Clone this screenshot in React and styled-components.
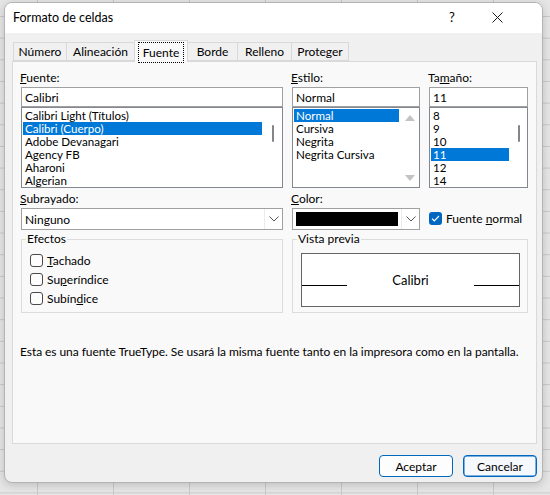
import React from 'react';
import styled, { createGlobalStyle } from 'styled-components';

const GlobalStyle = createGlobalStyle`
  html, body { margin: 0; padding: 0; }
  body {
    width: 550px;
    height: 495px;
    overflow: hidden;
    background-color: #e6e6e6;
    background-image:
      linear-gradient(to bottom, #c9c9c9 1px, transparent 1px),
      linear-gradient(to right, #c9c9c9 1px, transparent 1px);
    background-size: 100% 21.67px, 76px 100%;
    background-position: 0 16px, 37px 0;
    font-family: Lato, "Open Sans", sans-serif;
  }
`;

const Dialog = styled.div`
  box-sizing: border-box;
  width: 539px;
  height: 481px;
  margin: 2px 0 0 4px;
  border: 1px solid #b4b4b4;
  border-radius: 8px;
  overflow: hidden;
  background: #f0f0f0;
  box-shadow: 0 2px 10px rgba(0, 0, 0, 0.18);
  display: flex;
  flex-direction: column;
  font-size: 12px;
  color: #000;
`;

const TitleBar = styled.div`
  height: 30px;
  background: #fff;
  display: flex;
  align-items: center;
  padding: 0 0 2px 8px;
  box-sizing: border-box;
`;

const Title = styled.div`
  flex: 1;
  font-size: 12.5px;
`;

const TitleButton = styled.div`
  width: 30px;
  height: 28px;
  display: flex;
  align-items: center;
  justify-content: center;
  font-size: 13px;
  margin-left: ${p => p.$ml || 0}px;
  margin-right: ${p => p.$mr || 0}px;
`;

const Body = styled.div`
  flex: 1;
  padding: 7px 5px 0 7px;
  display: flex;
  flex-direction: column;
`;

const TabStrip = styled.div`
  height: 21px;
  display: flex;
  align-items: flex-end;
  padding-left: 1px;
  position: relative;
  z-index: 1;
`;

const Tab = styled.div`
  box-sizing: border-box;
  width: ${p => p.$w}px;
  height: ${p => (p.$active ? 22 : 19)}px;
  margin-left: -1px;
  margin-bottom: ${p => (p.$active ? -1 : 0)}px;
  border: 1px solid #d9d9d9;
  border-bottom: ${p => (p.$active ? 'none' : '1px solid #d9d9d9')};
  background: ${p => (p.$active ? '#f9f9f9' : '#f0f0f0')};
  display: flex;
  align-items: center;
  justify-content: center;
  &:first-child { margin-left: 0; }
`;

const FocusRect = styled.span`
  box-sizing: border-box;
  width: 100%;
  height: 100%;
  margin: 2px 3px 1px;
  outline: 1px dotted #000;
  outline-offset: -1px;
  display: flex;
  align-items: center;
  justify-content: center;
`;

const Panel = styled.div`
  box-sizing: border-box;
  height: 383px;
  background: #f9f9f9;
  border: 1px solid #d9d9d9;
  padding: 8px 8px 0 8px;
`;

const Grid = styled.div`
  display: grid;
  grid-template-columns: 262px 128px 99px;
  column-gap: 9px;
`;

const Column = styled.div`
  display: flex;
  flex-direction: column;
`;

const Label = styled.div`
  height: 17px;
  line-height: 16px;
  margin-left: -1px;
  margin-top: ${p => p.$mt || 0}px;
  margin-bottom: ${p => p.$mb || 0}px;
`;

const Input = styled.div`
  box-sizing: border-box;
  height: 20px;
  border: 1px solid #a0a0a0;
  background: #fff;
  padding-left: 3px;
  display: flex;
  align-items: center;
`;

const List = styled.div`
  box-sizing: border-box;
  height: 81px;
  border: 1px solid #828790;
  background: #fff;
  display: flex;
`;

const Items = styled.div`
  flex: 1;
  padding: 1px;
  overflow: hidden;
  font-size: 11.6px;
`;

const Item = styled.div`
  height: 13px;
  line-height: 13px;
  padding-left: 2px;
  white-space: nowrap;
  background: ${p => (p.$sel ? '#0078d7' : 'transparent')};
  color: ${p => (p.$sel ? '#fff' : '#000')};
`;

const ScrollTrack = styled.div`
  width: ${p => p.$w}px;
  display: flex;
  flex-direction: column;
  align-items: center;
  justify-content: ${p => (p.$arrows ? 'space-between' : 'flex-start')};
  padding: ${p => (p.$arrows ? '7px 0 6px' : '17px 0 0')};
`;

const Thumb = styled.div`
  width: 2px;
  height: 17px;
  border-radius: 1px;
  background: #858585;
`;

const Arrow = styled.div`
  width: 0;
  height: 0;
  border-left: 5px solid transparent;
  border-right: 5px solid transparent;
  ${p => (p.$up ? 'border-bottom' : 'border-top')}: 6px solid #c3c3c3;
`;

const Select = styled.div`
  box-sizing: border-box;
  height: 22px;
  border: 1px solid #a0a0a0;
  background: #fff;
  display: flex;
  align-items: stretch;
`;

const SelectValue = styled.div`
  flex: 1;
  display: flex;
  align-items: center;
  padding: ${p => (p.$swatch ? '3px' : '0 0 0 3px')};
`;

const Swatch = styled.div`
  flex: 1;
  align-self: stretch;
  background: #000;
`;

const Chevron = styled.div`
  width: 17px;
  display: flex;
  align-items: center;
  justify-content: center;
  border-left: 1px solid #ebebeb;
`;

const CheckRow = styled.label`
  height: ${p => p.$h || 19}px;
  display: flex;
  align-items: center;
  gap: 4px;
  margin-top: ${p => p.$mt || 0}px;
`;

const Box = styled.span`
  box-sizing: border-box;
  width: 13px;
  height: 13px;
  border-radius: 3px;
  border: ${p => (p.$checked ? 'none' : '1px solid #4a4a4a')};
  background: ${p => (p.$checked ? '#0067c0' : '#fdfdfd')};
  display: flex;
  align-items: center;
  justify-content: center;
`;

const Group = styled.fieldset`
  box-sizing: border-box;
  margin: 2px 0 0;
  height: 81px;
  border: 1px solid #dcdcdc;
  padding: 0 7px 0 8px;
  min-width: 0;
  grid-column: ${p => p.$span || 'auto'};
`;

const Legend = styled.legend`
  padding: 0 1px;
  margin-left: -4px;
  line-height: 14px;
`;

const GroupBody = styled.div`
  padding-top: 5px;
`;

const Preview = styled.div`
  box-sizing: border-box;
  height: 54px;
  margin-top: 7px;
  background: #fff;
  border: 1px solid #646464;
  display: flex;
  align-items: center;
`;

const Rule = styled.div`
  width: 45px;
  height: 1px;
  background: #000;
  margin-top: 11px;
`;

const Sample = styled.div`
  flex: 1;
  text-align: center;
  font-size: 13px;
`;

const Note = styled.div`
  margin: 31px 0 0 -1px;
  line-height: 16px;
  letter-spacing: -0.06px;
`;

const Footer = styled.div`
  display: flex;
  justify-content: flex-end;
  gap: 10px;
  padding-top: 11px;
`;

const Button = styled.button`
  box-sizing: border-box;
  width: 74px;
  height: 22px;
  border: 1px solid #0067c0;
  border-radius: 4px;
  background: ${p => (p.$default ? '#f5f9fd' : '#fdfdfd')};
  box-shadow: ${p => (p.$default ? 'inset 0 0 0 0.5px #0067c0' : 'none')};
  font: inherit;
  color: #000;
  padding: 0;
`;

const fonts = ['Calibri Light (Títulos)', 'Calibri (Cuerpo)', 'Adobe Devanagari', 'Agency FB', 'Aharoni', 'Algerian'];
const styles = ['Normal', 'Cursiva', 'Negrita', 'Negrita Cursiva'];
const sizes = ['8', '9', '10', '11', '12', '14'];
const tabs = [
  ['Número', 54], ['Alineación', 69], ['Fuente', 54], ['Borde', 51], ['Relleno', 55], ['Proteger', 58],
];

const ChevronIcon = () => (
  <svg width="10" height="6" viewBox="0 0 10 6">
    <polyline points="0.5,0.5 5,5 9.5,0.5" fill="none" stroke="#555" strokeWidth="1" />
  </svg>
);

const Check = ({ checked, label, mt, h }) => (
  <CheckRow $mt={mt} $h={h}>
    <Box $checked={checked}>
      {checked && (
        <svg width="9" height="7" viewBox="0 0 9 7">
          <polyline points="1,3.6 3.3,5.8 8,1" fill="none" stroke="#fff" strokeWidth="1.2" />
        </svg>
      )}
    </Box>
    <span>{label}</span>
  </CheckRow>
);

export default function App() {
  return (
    <>
      <GlobalStyle />
      <Dialog>
        <TitleBar>
          <Title>Formato de celdas</Title>
          <TitleButton>?</TitleButton>
          <TitleButton $ml={15} $mr={30}>
            <svg width="11" height="11" viewBox="0 0 11 11">
              <path d="M0.5 0.5 L10.5 10.5 M10.5 0.5 L0.5 10.5" stroke="#1a1a1a" strokeWidth="1" />
            </svg>
          </TitleButton>
        </TitleBar>
        <Body>
          <TabStrip>
            {tabs.map(([t, w]) => (
              <Tab key={t} $w={w} $active={t === 'Fuente'}>
                {t === 'Fuente' ? <FocusRect>{t}</FocusRect> : t}
              </Tab>
            ))}
          </TabStrip>
          <Panel>
            <Grid>
              <Column>
                <Label><u>F</u>uente:</Label>
                <Input>Calibri</Input>
                <List>
                  <Items>
                    {fonts.map(f => <Item key={f} $sel={f === 'Calibri (Cuerpo)'}>{f}</Item>)}
                  </Items>
                  <ScrollTrack $w={19}><Thumb /></ScrollTrack>
                </List>
                <Label $mt={3}><u>S</u>ubrayado:</Label>
                <Select>
                  <SelectValue>Ninguno</SelectValue>
                  <Chevron><ChevronIcon /></Chevron>
                </Select>
              </Column>
              <Column>
                <Label><u>E</u>stilo:</Label>
                <Input>Normal</Input>
                <List>
                  <Items>
                    {styles.map(s => <Item key={s} $sel={s === 'Normal'}>{s}</Item>)}
                  </Items>
                  <ScrollTrack $w={19} $arrows><Arrow $up /><Arrow /></ScrollTrack>
                </List>
                <Label $mt={3}><u>C</u>olor:</Label>
                <Select>
                  <SelectValue $swatch><Swatch /></SelectValue>
                  <Chevron><ChevronIcon /></Chevron>
                </Select>
              </Column>
              <Column>
                <Label>Ta<u>m</u>año:</Label>
                <Input>11</Input>
                <List>
                  <Items>
                    {sizes.map(s => <Item key={s} $sel={s === '11'}>{s}</Item>)}
                  </Items>
                  <ScrollTrack $w={17}><Thumb /></ScrollTrack>
                </List>
                <Check checked mt={20} h={20} label={<>Fuente <u>n</u>ormal</>} />
              </Column>
              <Group>
                <Legend>Efectos</Legend>
                <GroupBody>
                  <Check label={<><u>T</u>achado</>} />
                  <Check label={<>Su<u>p</u>eríndice</>} />
                  <Check label={<>Subín<u>d</u>ice</>} />
                </GroupBody>
              </Group>
              <Group $span="2 / 4">
                <Legend>Vista previa</Legend>
                <Preview>
                  <Rule />
                  <Sample>Calibri</Sample>
                  <Rule />
                </Preview>
              </Group>
            </Grid>
            <Note>Esta es una fuente TrueType. Se usará la misma fuente tanto en la impresora como en la pantalla.</Note>
          </Panel>
          <Footer>
            <Button>Aceptar</Button>
            <Button $default>Cancelar</Button>
          </Footer>
        </Body>
      </Dialog>
    </>
  );
}
